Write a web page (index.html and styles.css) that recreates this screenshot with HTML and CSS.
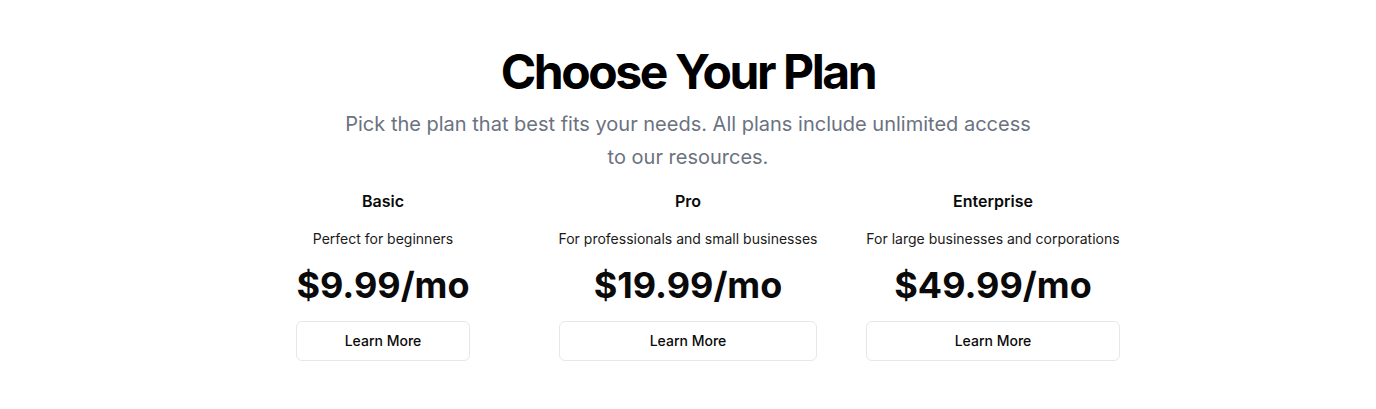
FILE: index.html
```html
<!DOCTYPE html>
<html lang="en">
<head>
<meta charset="utf-8">
<title>Choose Your Plan</title>
<link rel="stylesheet" href="styles.css">
</head>
<body>
<section class="pricing">
  <header class="intro">
    <h1 class="title">Choose Your Plan</h1>
    <p class="lead">Pick the plan that best fits your needs. All plans include unlimited access to our resources.</p>
  </header>
  <div class="plans">
    <div class="plan">
      <h3 class="plan-name">Basic</h3>
      <p class="plan-desc">Perfect for beginners</p>
      <div class="plan-price">$9.99/mo</div>
      <button class="plan-btn">Learn More</button>
    </div>
    <div class="plan">
      <h3 class="plan-name">Pro</h3>
      <p class="plan-desc">For professionals and small businesses</p>
      <div class="plan-price">$19.99/mo</div>
      <button class="plan-btn">Learn More</button>
    </div>
    <div class="plan">
      <h3 class="plan-name">Enterprise</h3>
      <p class="plan-desc">For large businesses and corporations</p>
      <div class="plan-price">$49.99/mo</div>
      <button class="plan-btn">Learn More</button>
    </div>
  </div>
</section>
</body>
</html>
```

FILE: styles.css
```css
* { box-sizing: border-box; }
html, body { margin: 0; padding: 0; background: #fff; }
body {
  font-family: Inter, "Noto Sans", sans-serif;
  color: #0a0a0a;
}
.pricing {
  padding: 48px 16px;
  display: flex;
  flex-direction: column;
  align-items: center;
}
.intro {
  display: flex;
  flex-direction: column;
  align-items: center;
  text-align: center;
}
.title {
  margin: 0;
  font-size: 48px;
  line-height: 48px;
  font-weight: 700;
  letter-spacing: -0.05em;
  color: #000;
}
.lead {
  margin: 12px 0 0;
  max-width: 700px;
  font-size: 20px;
  line-height: 32.5px;
  color: #6b7280;
}
.plans {
  margin-top: 16px;
  display: grid;
  grid-template-columns: repeat(3, 289px);
  column-gap: 16px;
  justify-items: center;
}
.plan {
  display: flex;
  flex-direction: column;
  align-items: center;
  text-align: center;
}
.plan-name {
  margin: 0;
  font-size: 16px;
  line-height: 24px;
  font-weight: 600;
}
.plan-desc {
  margin: 16px 0 0;
  font-size: 14px;
  line-height: 20px;
  color: #1a1a1a;
}
.plan-price {
  margin-top: 16px;
  font-size: 36px;
  line-height: 40px;
  font-weight: 700;
}
.plan-btn {
  margin-top: 16px;
  width: 100%;
  height: 40px;
  padding: 0 16px 1px;
  font-family: inherit;
  font-size: 14px;
  font-weight: 500;
  color: #0a0a0a;
  background: #fff;
  border: 1px solid #e5e7eb;
  border-radius: 6px;
}
```
